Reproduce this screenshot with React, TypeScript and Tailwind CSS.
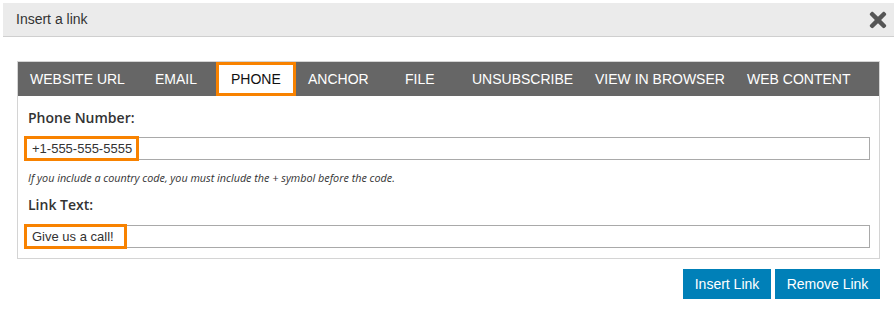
import { FaTimes } from "react-icons/fa";

const tabs = [
  { label: "WEBSITE URL", w: "w-[124px]", pl: "pl-[12px]" },
  { label: "EMAIL", w: "w-[74px]", pl: "pl-[13px]" },
  { label: "PHONE", w: "w-[80px]", pl: "pl-[12px]", active: true },
  { label: "ANCHOR", w: "w-[96px]", pl: "pl-[12px]" },
  { label: "FILE", w: "w-[67px]", pl: "pl-[13px]" },
  { label: "UNSUBSCRIBE", w: "w-[123px]", pl: "pl-[13px]" },
  { label: "VIEW IN BROWSER", w: "w-[152px]", pl: "pl-[13px]" },
  { label: "WEB CONTENT", w: "flex-1", pl: "pl-[13px]" },
];

const arial = "font-['Liberation_Sans',Arial,sans-serif]";
const open = "font-['Open_Sans','Noto_Sans',sans-serif]";

function Field({ value, boxWidth }: { value: string; boxWidth: string }) {
  return (
    <div className="relative ml-[6px] mr-[9px]">
      <div className={`h-[23px] border border-[#a9a9a9] bg-white pl-[7px] flex items-center text-[13px] text-[#333] ${arial}`}>
        {value}
      </div>
      {/* orange annotation box */}
      <div className={`absolute left-0 top-[-1px] h-[25px] ${boxWidth} border-[3px] border-[#f88200]`} />
    </div>
  );
}

export default function App() {
  return (
    <div className="w-[895px] h-[316px] bg-white pt-[3px] pl-[3px] pr-[1px]">
      {/* dialog header */}
      <div className="h-[34px] bg-[#ebebeb] border-b border-[#cfcfcf] flex items-center justify-between pl-[13px] pr-[4px]">
        <span className={`text-[14px] text-[#333] ${arial}`}>Insert a link</span>
        <FaTimes className="text-[#555] w-[24px] h-[24px]" />
      </div>

      <div className="pl-[14px] pr-[14px] pt-[24px]">
        <div className="border border-[#d4d4d4]">
          {/* tabs */}
          <div className={`h-[34px] bg-[#666] flex text-[14px] ${arial}`}>
            {tabs.map((t) =>
              t.active ? (
                <div
                  key={t.label}
                  className={`${t.w} ${t.pl} bg-white border-[3px] border-[#f88200] flex items-center text-[#111]`}
                >
                  {t.label}
                </div>
              ) : (
                <div key={t.label} className={`${t.w} ${t.pl} flex items-center text-white`}>
                  {t.label}
                </div>
              )
            )}
          </div>

          {/* content */}
          <div className="pt-[13px] pb-[10px]">
            <div className={`pl-[10px] text-[14px] font-semibold text-[#333] leading-[18px] ${open}`}>Phone Number:</div>
            <div className="mt-[10px]">
              <Field value="+1-555-555-5555" boxWidth="w-[115px]" />
            </div>
            <div className={`pl-[10px] mt-[11px] text-[10.8px] italic text-[#333] leading-[14px] ${open}`}>
              If you include a country code, you must include the + symbol before the code.
            </div>
            <div className={`pl-[10px] mt-[11px] text-[14px] font-semibold text-[#333] leading-[18px] ${open}`}>Link Text:</div>
            <div className="mt-[11px]">
              <Field value="Give us a call!" boxWidth="w-[103px]" />
            </div>
          </div>
        </div>

        {/* actions */}
        <div className={`flex justify-end gap-[4px] mt-[10px] text-[14px] text-white ${arial}`}>
          <button className="w-[88px] h-[30px] bg-[#0080b8]">Insert Link</button>
          <button className="w-[105px] h-[30px] bg-[#0080b8]">Remove Link</button>
        </div>
      </div>
    </div>
  );
}
